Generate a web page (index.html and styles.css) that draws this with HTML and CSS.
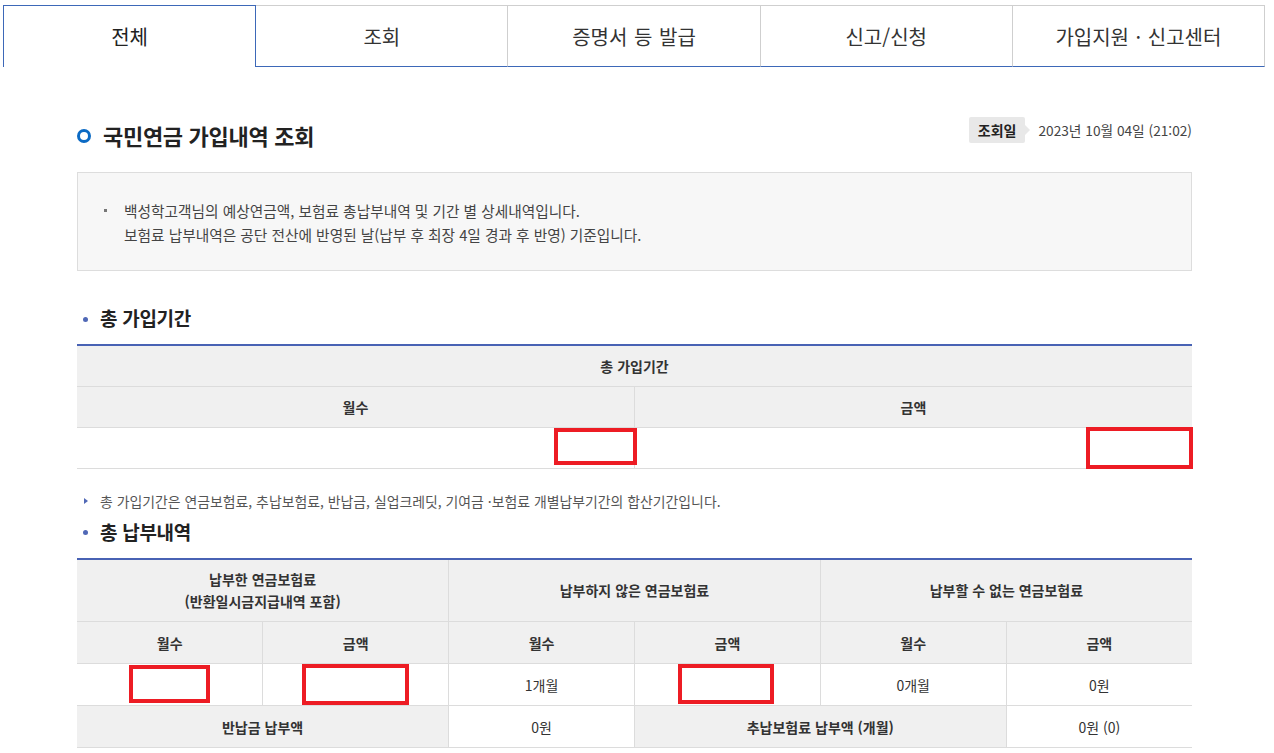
FILE: index.html
```html
<!DOCTYPE html>
<html lang="ko">
<head>
<meta charset="utf-8">
<title>국민연금 가입내역 조회</title>
<link rel="stylesheet" href="styles.css">
</head>
<body>
<ul class="tabs">
  <li class="tab active">전체</li>
  <li class="tab">조회</li>
  <li class="tab">증명서 등 발급</li>
  <li class="tab">신고/신청</li>
  <li class="tab">가입지원 · 신고센터</li>
</ul>

<div class="content">
  <div class="title-row">
    <h2 class="page-title"><span class="ring"></span>국민연금 가입내역 조회</h2>
    <div class="query-date"><span class="badge">조회일</span><span class="date">2023년 10월 04일 (21:02)</span></div>
  </div>

  <div class="info-box">
    <p class="info-line"><span class="sq"></span>백성학고객님의 예상연금액, 보험료 총납부내역 및 기간 별 상세내역입니다.</p>
    <p class="info-line">보험료 납부내역은 공단 전산에 반영된 날(납부 후 최장 4일 경과 후 반영) 기준입니다.</p>
  </div>

  <h3 class="sec-title first"><span class="dot"></span>총 가입기간</h3>
  <div class="tbl-wrap">
    <table class="tbl tbl1">
      <tr class="r1"><th colspan="2">총 가입기간</th></tr>
      <tr class="r2"><th>월수</th><th>금액</th></tr>
      <tr class="r3"><td></td><td></td></tr>
    </table>
    <span class="redact t1a"></span>
    <span class="redact t1b"></span>
  </div>

  <p class="note"><span class="tri"></span>총 가입기간은 연금보험료, 추납보험료, 반납금, 실업크레딧, 기여금 ·보험료 개별납부기간의 합산기간입니다.</p>

  <h3 class="sec-title second"><span class="dot"></span>총 납부내역</h3>
  <div class="tbl-wrap">
    <table class="tbl tbl2">
      <colgroup><col><col><col><col><col><col></colgroup>
      <tr class="h1">
        <th colspan="2">납부한 연금보험료<br>(반환일시금지급내역 포함)</th>
        <th colspan="2">납부하지 않은 연금보험료</th>
        <th colspan="2">납부할 수 없는 연금보험료</th>
      </tr>
      <tr class="r2"><th>월수</th><th>금액</th><th>월수</th><th>금액</th><th>월수</th><th>금액</th></tr>
      <tr class="r3"><td></td><td></td><td>1개월</td><td></td><td>0개월</td><td>0원</td></tr>
      <tr class="r3 last"><th colspan="2">반납금 납부액</th><td>0원</td><th colspan="2">추납보험료 납부액 (개월)</th><td>0원 (0)</td></tr>
    </table>
    <span class="redact t2a"></span>
    <span class="redact t2b"></span>
    <span class="redact t2c"></span>
  </div>
</div>
</body>
</html>
```

FILE: styles.css
```css
* { box-sizing: border-box; }
html, body { margin: 0; padding: 0; background: #fff; }
body {
  font-family: "Noto Sans CJK KR", "Noto Sans", sans-serif;
  color: #333;
  width: 1274px;
  overflow: hidden;
}

.tabs {
  list-style: none;
  margin: 5px 0 0 3px;
  padding: 0;
  width: 1262px;
  height: 62px;
  display: flex;
}
.tab {
  flex: 1 1 0;
  display: flex;
  align-items: center;
  justify-content: center;
  font-size: 20px;
  color: #333;
  border-top: 1px solid #cfcfcf;
  border-right: 1px solid #cfcfcf;
  border-bottom: 1px solid #3d68b8;
  padding-top: 1px;
  word-spacing: 1px;
}
.tab.active {
  border: 1px solid #3d68b8;
  border-bottom: 0;
  color: #222;
  padding-bottom: 1px;
}

.content {
  margin-left: 77px;
  width: 1115px;
}

.title-row {
  margin-top: 50px;
  height: 30px;
  display: flex;
  justify-content: space-between;
  align-items: flex-start;
}
.page-title {
  margin: 4px 0 0 0;
  font-size: 22px;
  line-height: 28px;
  font-weight: 700;
  color: #222;
  display: flex;
  align-items: center;
  letter-spacing: -0.3px;
}
.ring {
  width: 14px;
  height: 14px;
  border: 3.5px solid #0b6ac4;
  border-radius: 50%;
  margin: 1px 12px 0 0;
}
.query-date {
  display: flex;
  align-items: center;
  height: 26px;
}
.badge {
  position: relative;
  height: 26px;
  line-height: 26px;
  padding: 0 9px;
  background: #e8e8e8;
  font-size: 14px;
  font-weight: 700;
  color: #222;
  border-radius: 2px;
}
.badge::after {
  content: "";
  position: absolute;
  right: -5px;
  top: 8px;
  border-left: 5px solid #e8e8e8;
  border-top: 5px solid transparent;
  border-bottom: 5px solid transparent;
}
.date {
  margin-left: 13px;
  font-size: 13.7px;
  color: #444;
}

.info-box {
  margin-top: 25px;
  background: #f7f7f7;
  border: 1px solid #dddddd;
  padding: 26px 0 23px 46px;
}
.info-line {
  margin: 0;
  font-size: 14.7px;
  line-height: 24px;
  color: #444;
  display: flex;
  align-items: center;
}
.sq {
  width: 3px;
  height: 3px;
  background: #777;
  margin-left: -20px;
  margin-right: 17px;
  margin-top: -2px;
}

.sec-title {
  margin: 0;
  font-size: 19px;
  line-height: 28px;
  font-weight: 700;
  color: #222;
  display: flex;
  align-items: center;
  letter-spacing: -0.3px;
}
.sec-title.first { margin-top: 33px; }
.sec-title.second { margin-top: 7px; }
.dot {
  width: 5px;
  height: 5px;
  border-radius: 50%;
  background: #5068b6;
  margin: 2px 12px 0 6px;
}

.tbl-wrap {
  position: relative;
  margin-top: 12px;
}
.tbl {
  width: 100%;
  border-collapse: collapse;
  table-layout: fixed;
  border-top: 2px solid #4862b4;
  border-bottom: 1px solid #b9b9b9;
}
.tbl th, .tbl td {
  padding: 0;
  text-align: center;
  font-size: 14px;
  border-bottom: 1px solid #dcdcdc;
  border-left: 1px solid #dcdcdc;
  color: #333;
}
.tbl th:first-child, .tbl td:first-child { border-left: 0; }
.tbl th {
  background: #f0f0f0;
  font-weight: 700;
}
.tbl td { background: #fff; }
.tbl1 th, .tbl1 td { height: 41px; }
.tbl2 .r2 th, .tbl2 .r3 th, .tbl2 .r3 td { height: 42px; }
.tbl2 .h1 th { height: 63px; line-height: 22px; }

.note {
  margin: 22px 0 0 0;
  font-size: 13.9px;
  line-height: 20px;
  color: #555;
  display: flex;
  align-items: center;
}
.tri {
  width: 0;
  height: 0;
  border-left: 4px solid #5068b6;
  border-top: 3.5px solid transparent;
  border-bottom: 3.5px solid transparent;
  margin: 0 12px 0 7px;
}

.redact {
  position: absolute;
  border: 4px solid #ed1c24;
}
.t1a { left: 477px; top: 84px; width: 83px; height: 37px; }
.t1b { left: 1009px; top: 83px; width: 107px; height: 42px; }
.t2a { left: 52px; top: 107px; width: 81px; height: 38px; }
.t2b { left: 225px; top: 106px; width: 107px; height: 41px; }
.t2c { left: 601px; top: 106px; width: 96px; height: 40px; }
```
